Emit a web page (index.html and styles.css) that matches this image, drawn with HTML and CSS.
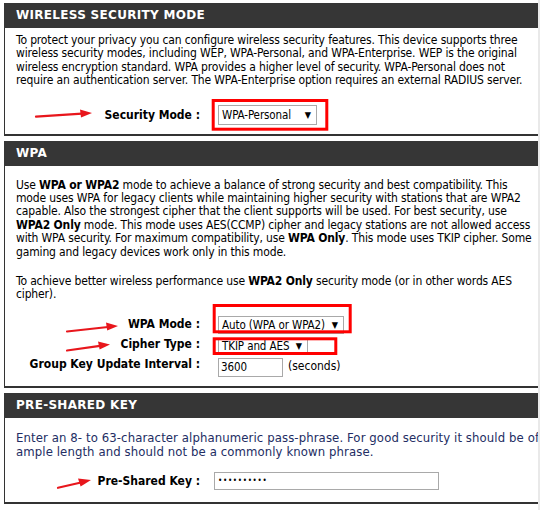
FILE: index.html
```html
<!DOCTYPE html>
<html>
<head>
<meta charset="utf-8">
<link rel="stylesheet" href="styles.css">
</head>
<body>
<div class="page">
  <section class="box">
    <h2 class="bar">WIRELESS SECURITY MODE</h2>
    <div class="body b1">
      <p class="txt">To protect your privacy you can configure wireless security features. This device supports three<br>wireless security modes, including WEP, WPA-Personal, and WPA-Enterprise. WEP is the original<br>wireless encryption standard. WPA provides a higher level of security. WPA-Personal does not<br>require an authentication server. The WPA-Enterprise option requires an external RADIUS server.</p>
      <div class="row r1">
        <span class="lbl">Security Mode :</span>
        <span class="sel sel-mode">WPA-Personal<i class="caret">▼</i></span>
      </div>
    </div>
  </section>

  <section class="box">
    <h2 class="bar">WPA</h2>
    <div class="body b2">
      <p class="txt">Use <b>WPA or WPA2</b> mode to achieve a balance of strong security and best compatibility. This<br>mode uses WPA for legacy clients while maintaining higher security with stations that are WPA2<br>capable. Also the strongest cipher that the client supports will be used. For best security, use<br><b>WPA2 Only</b> mode. This mode uses AES(CCMP) cipher and legacy stations are not allowed access<br>with WPA security. For maximum compatibility, use <b>WPA Only</b>. This mode uses TKIP cipher. Some<br>gaming and legacy devices work only in this mode.</p>
      <p class="txt p2">To achieve better wireless performance use <b>WPA2 Only</b> security mode (or in other words AES<br>cipher).</p>
      <div class="rows">
        <div class="row">
          <span class="lbl">WPA Mode :</span>
          <span class="sel sel-wpa">Auto (WPA or WPA2)<i class="caret">▼</i></span>
        </div>
        <div class="row">
          <span class="lbl">Cipher Type :</span>
          <span class="sel sel-cipher">TKIP and AES<i class="caret">▼</i></span>
        </div>
        <div class="row">
          <span class="lbl">Group Key Update Interval :</span>
          <span class="inp inp-key">3600</span>
          <span class="unit">(seconds)</span>
        </div>
      </div>
    </div>
  </section>

  <section class="box">
    <h2 class="bar">PRE-SHARED KEY</h2>
    <div class="body b3">
      <p class="txt navy">Enter an 8- to 63-character alphanumeric pass-phrase. For good security it should be of<br>ample length and should not be a commonly known phrase.</p>
      <div class="row r3">
        <span class="lbl">Pre-Shared Key :</span>
        <span class="inp inp-psk">••••••••••</span>
      </div>
    </div>
  </section>

  <svg class="marks" width="540" height="510" viewBox="0 0 540 510">
    <g fill="none" stroke="#f00" stroke-width="3">
      <rect x="213.2" y="100.5" width="113.6" height="28.7"/>
      <rect x="214.2" y="305.5" width="136" height="26.3"/>
      <rect x="214.2" y="338.8" width="121.6" height="14.7"/>
    </g>
    <g stroke="#e8161c" stroke-width="2.2" stroke-linecap="round">
      <line x1="36" y1="116.6" x2="82" y2="113.6"/>
      <line x1="67" y1="331.5" x2="108" y2="327"/>
      <line x1="67" y1="350.5" x2="100" y2="345.8"/>
      <line x1="58" y1="487.8" x2="81" y2="482.5"/>
    </g>
    <g fill="#e8161c">
      <polygon points="92,113 80,109.4 81,117.4"/>
      <polygon points="118,326 106,322.6 107.2,330.6"/>
      <polygon points="110,344.4 98,341.4 99.6,349.4"/>
      <polygon points="91,480 78,478.4 80.6,486.4"/>
    </g>
  </svg>
</div>
</body>
</html>
```

FILE: styles.css
```css
* { box-sizing: border-box; }

html, body {
  margin: 0;
  padding: 0;
}

body {
  width: 540px;
  height: 510px;
  overflow: hidden;
  background: linear-gradient(to right, #ffffff 538px, #e9e9e9 538px);
  font-family: "DejaVu Sans Condensed", "DejaVu Sans", sans-serif;
  font-stretch: condensed;
  font-size: 12px;
  color: #000;
}

.page {
  position: relative;
  width: 540px;
  height: 510px;
  padding: 3px 2px 0 4px;
}

.box {
  width: 534px;
  margin-bottom: 5px;
}

.bar {
  margin: 0;
  height: 25px;
  background: #363636;
  color: #fff;
  font-family: "DejaVu Sans", sans-serif;
  font-stretch: normal;
  font-weight: bold;
  font-size: 12px;
  line-height: 25px;
  padding-left: 12px;
  letter-spacing: 0.3px;
}

.body {
  border-left: 1px solid #333;
  border-bottom: 2px solid #333;
  padding-left: 11px;
  overflow: hidden;
}

.txt {
  margin: 0;
  white-space: nowrap;
  line-height: 13.4px;
  letter-spacing: -0.15px;
}

.b1 { padding-top: 6px; padding-bottom: 9px; }
.b2 { padding-top: 13px; padding-bottom: 12px; }
.b3 { padding-top: 13px; padding-bottom: 12px; }

.p2 { margin-top: 16px; }

.navy {
  color: #232d63;
  font-size: 13px;
  line-height: 14.5px;
  letter-spacing: 0.1px;
}

.row {
  display: flex;
  align-items: center;
  height: 20px;
}

.r1 { margin-top: 17px; }
.rows { margin-top: 12px; }
.r3 { margin-top: 12px; height: 18px; }

.lbl {
  width: 184px;
  text-align: right;
  font-weight: bold;
  font-size: 12px;
  letter-spacing: 0px;
  flex: none;
}

.sel, .inp {
  display: inline-flex;
  align-items: center;
  background: #fff;
  border: 1px solid #a9a9a9;
  font-size: 11.5px;
  letter-spacing: -0.1px;
  white-space: nowrap;
  margin-left: 18px;
  color: #000;
  flex: none;
}

.sel {
  justify-content: space-between;
  padding: 0 5px 0 3px;
}

.caret {
  font-style: normal;
  font-size: 9px;
}

.sel-mode { width: 99px; height: 20px; }
.sel-wpa { width: 126px; height: 18px; margin-top: 3px; }
.sel-cipher { width: 90px; height: 15px; margin-top: 4px; }

.inp-key {
  width: 65px;
  height: 19px;
  padding-left: 2px;
  margin-top: 7px;
}

.unit {
  margin-left: 5px;
  margin-top: 5px;
  font-size: 12px;
}

.inp-psk {
  margin-left: 14px;
  width: 225px;
  height: 18px;
  padding-left: 3px;
  font-size: 8px;
  letter-spacing: 0.7px;
}

.marks {
  position: absolute;
  left: 0;
  top: 0;
  pointer-events: none;
}
```
